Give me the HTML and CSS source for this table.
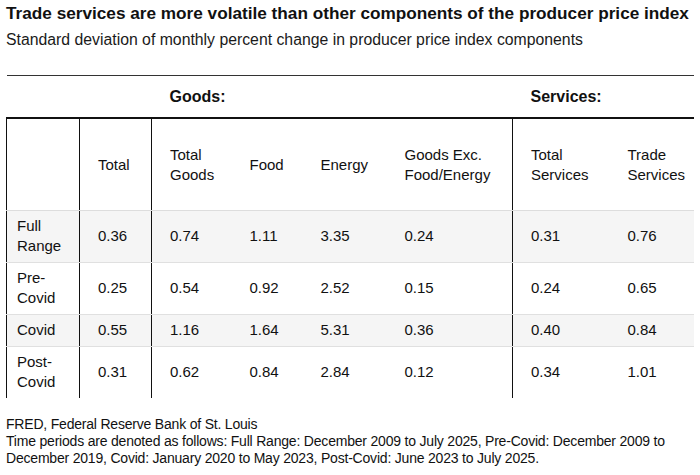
FILE: index.html
```html
<!DOCTYPE html>
<html lang="en">
<head>
<meta charset="utf-8">
<link rel="stylesheet" href="styles.css">
</head>
<body>
<div class="page">
  <h1 class="title">Trade services are more volatile than other components of the producer price index</h1>
  <p class="subtitle">Standard deviation of monthly percent change in producer price index components</p>
  <table class="ppi">
    <colgroup>
      <col class="c1"><col class="c2"><col class="c3"><col class="c4"><col class="c5"><col class="c6"><col class="c7"><col class="c8">
    </colgroup>
    <thead>
      <tr class="group">
        <th></th><th></th><th colspan="4">Goods:</th><th colspan="2">Services:</th>
      </tr>
      <tr class="cols">
        <th class="lbl"></th>
        <th class="vl">Total</th>
        <th class="vl">Total<br>Goods</th>
        <th>Food</th>
        <th>Energy</th>
        <th>Goods Exc.<br>Food/Energy</th>
        <th class="vl">Total<br>Services</th>
        <th>Trade<br>Services</th>
      </tr>
    </thead>
    <tbody>
      <tr class="shade">
        <td class="lbl">Full<br>Range</td><td class="vl">0.36</td><td class="vl">0.74</td><td>1.11</td><td>3.35</td><td>0.24</td><td class="vl">0.31</td><td>0.76</td>
      </tr>
      <tr>
        <td class="lbl">Pre-<br>Covid</td><td class="vl">0.25</td><td class="vl">0.54</td><td>0.92</td><td>2.52</td><td>0.15</td><td class="vl">0.24</td><td>0.65</td>
      </tr>
      <tr class="shade">
        <td class="lbl">Covid</td><td class="vl">0.55</td><td class="vl">1.16</td><td>1.64</td><td>5.31</td><td>0.36</td><td class="vl">0.40</td><td>0.84</td>
      </tr>
      <tr>
        <td class="lbl">Post-<br>Covid</td><td class="vl">0.31</td><td class="vl">0.62</td><td>0.84</td><td>2.84</td><td>0.12</td><td class="vl">0.34</td><td>1.01</td>
      </tr>
    </tbody>
  </table>
  <div class="notes">
    <p>FRED, Federal Reserve Bank of St. Louis</p>
    <p>Time periods are denoted as follows: Full Range: December 2009 to July 2025, Pre-Covid: December 2009 to December 2019, Covid: January 2020 to May 2023, Post-Covid: June 2023 to July 2025.</p>
  </div>
</div>
</body>
</html>
```
FILE: styles.css
```css
html, body {
  margin: 0;
  padding: 0;
  background: #ffffff;
}
body {
  font-family: "Liberation Sans", Arial, sans-serif;
  color: #111111;
}
.page {
  padding: 3px 0 0 6px;
  width: 688px;
}
.title {
  margin: 0;
  font-size: 17.2px;
  line-height: 20px;
  font-weight: bold;
  white-space: nowrap;
}
.subtitle {
  margin: 7px 0 0 0;
  font-size: 15.8px;
  line-height: 20px;
  color: #1a1a1a;
}
.ppi {
  margin-top: 25px;
  border-collapse: collapse;
  table-layout: fixed;
  width: 687px;
  font-size: 15px;
  line-height: 20px;
}
.c1 { width: 73px; }
.c2 { width: 72px; }
.c3 { width: 80px; }
.c4 { width: 71px; }
.c5 { width: 84px; }
.c6 { width: 126px; }
.c7 { width: 97px; }
.c8 { width: 84px; }
.ppi th, .ppi td {
  padding: 5px 0 6px 18px;
  text-align: left;
  vertical-align: middle;
  font-weight: normal;
}
.ppi .group th {
  border-top: 1px solid #333333;
  border-bottom: 2px solid #111111;
  height: 41px;
  padding-top: 0;
  padding-bottom: 0;
  font-weight: bold;
  font-size: 16px;
}
.ppi .cols th {
  height: 91px;
  padding-top: 0;
  padding-bottom: 0;
  border-bottom: 1px solid #dddddd;
}
.ppi tbody td {
  border-bottom: 1px solid #e0e0e0;
}
.ppi tbody tr:last-child td {
  border-bottom: none;
}
.ppi .lbl {
  padding-left: 10px;
  border-left: 1px solid #111111;
}
.ppi .vl {
  border-left: 1px solid #111111;
}
.ppi .shade td {
  background: #f5f5f5;
}
.notes {
  margin-top: 18px;
  font-size: 14px;
  letter-spacing: -0.2px;
  line-height: 17px;
  width: 680px;
}
.notes p {
  margin: 0;
}
```
